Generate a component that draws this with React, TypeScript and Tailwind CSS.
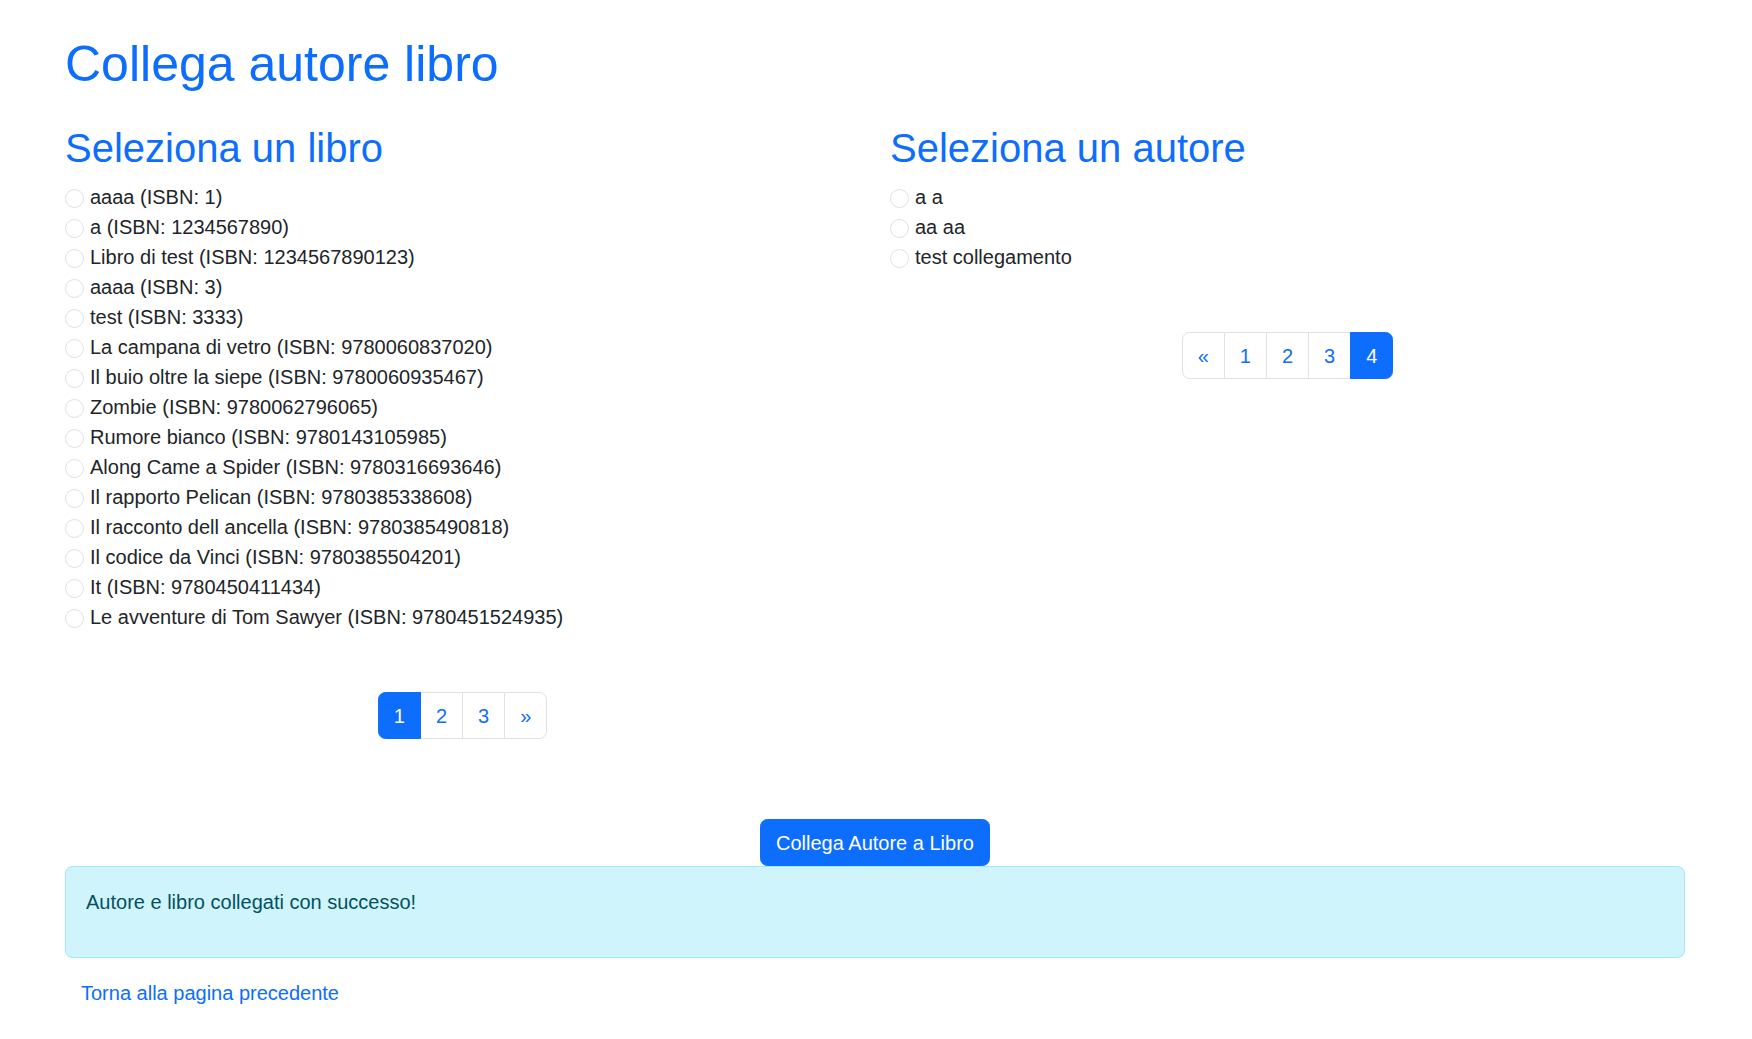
import { useState } from 'react';

const books = [
  { title: 'aaaa', isbn: '1' },
  { title: 'a', isbn: '1234567890' },
  { title: 'Libro di test', isbn: '1234567890123' },
  { title: 'aaaa', isbn: '3' },
  { title: 'test', isbn: '3333' },
  { title: 'La campana di vetro', isbn: '9780060837020' },
  { title: 'Il buio oltre la siepe', isbn: '9780060935467' },
  { title: 'Zombie', isbn: '9780062796065' },
  { title: 'Rumore bianco', isbn: '9780143105985' },
  { title: 'Along Came a Spider', isbn: '9780316693646' },
  { title: 'Il rapporto Pelican', isbn: '9780385338608' },
  { title: 'Il racconto dell ancella', isbn: '9780385490818' },
  { title: 'Il codice da Vinci', isbn: '9780385504201' },
  { title: 'It', isbn: '9780450411434' },
  { title: 'Le avventure di Tom Sawyer', isbn: '9780451524935' },
];

const authors = ['a a', 'aa aa', 'test collegamento'];

interface RadioRowProps {
  label: string;
  checked: boolean;
  onSelect: () => void;
}

function RadioRow({ label, checked, onSelect }: RadioRowProps) {
  return (
    <label className="flex items-center h-[30px] cursor-pointer" onClick={onSelect}>
      <span
        className={`w-[19px] h-[19px] mt-[2px] rounded-full border shrink-0 mr-[6px] flex items-center justify-center ${
          checked ? 'border-[#0d6efd] bg-[#0d6efd]' : 'border-[#dee2e6] bg-white'
        }`}
      >
        {checked && <span className="w-[8px] h-[8px] rounded-full bg-white" />}
      </span>
      <span>{label}</span>
    </label>
  );
}

interface PaginationProps {
  items: string[];
  active: string;
}

function Pagination({ items, active }: PaginationProps) {
  return (
    <nav className="flex justify-center">
      <ul className="flex">
        {items.map((item, i) => {
          const isActive = item === active;
          const first = i === 0;
          const last = i === items.length - 1;
          return (
            <li key={item}>
              <a
                href="#"
                className={`relative block px-[15px] py-[7.5px] leading-[30px] border no-underline ${
                  first ? 'rounded-l-[7.5px]' : '-ml-px'
                } ${last ? 'rounded-r-[7.5px]' : ''} ${
                  isActive
                    ? 'z-10 bg-[#0d6efd] border-[#0d6efd] text-white'
                    : 'bg-white border-[#dee2e6] text-[#0d6efd]'
                }`}
              >
                {item}
              </a>
            </li>
          );
        })}
      </ul>
    </nav>
  );
}

export default function App() {
  const [book, setBook] = useState<number | null>(null);
  const [author, setAuthor] = useState<number | null>(null);

  return (
    <div
      className="min-h-screen bg-white text-[#212529] text-[20px] leading-[30px]"
      style={{ fontFamily: '"Liberation Sans", Arial, sans-serif' }}
    >
      <div className="w-[1650px] ml-[50px] px-[15px] pt-[34px]">
        <h1 className="text-[50px] leading-[60px] text-[#0d6efd]">Collega autore libro</h1>

        <div className="flex -mx-[15px] mt-[30px]">
          {/* Book column */}
          <div className="w-1/2 px-[15px]">
            <h2 className="text-[40px] leading-[48px] text-[#0d6efd] mb-[10px]">Seleziona un libro</h2>
            <div>
              {books.map((b, i) => (
                <RadioRow
                  key={b.isbn}
                  label={`${b.title} (ISBN: ${b.isbn})`}
                  checked={book === i}
                  onSelect={() => setBook(i)}
                />
              ))}
            </div>
            <div className="mt-[60px]">
              <Pagination items={['1', '2', '3', '»']} active="1" />
            </div>
          </div>

          {/* Author column */}
          <div className="w-1/2 px-[15px]">
            <h2 className="text-[40px] leading-[48px] text-[#0d6efd] mb-[10px]">Seleziona un autore</h2>
            <div>
              {authors.map((a, i) => (
                <RadioRow key={a} label={a} checked={author === i} onSelect={() => setAuthor(i)} />
              ))}
            </div>
            <div className="mt-[60px]">
              <Pagination items={['«', '1', '2', '3', '4']} active="4" />
            </div>
          </div>
        </div>

        <div className="flex justify-center mt-[80px]">
          <button className="bg-[#0d6efd] text-white border border-[#0d6efd] rounded-[7.5px] px-[15px] py-[7.5px] leading-[30px]">
            Collega Autore a Libro
          </button>
        </div>

        <div className="bg-[#cff4fc] border border-[#9eeaf9] text-[#055160] rounded-[7.5px] p-[20px]">
          <p className="mb-[20px]">Autore e libro collegati con successo!</p>
        </div>

        <a
          href="#"
          className="inline-block mt-[11px] px-[15px] py-[7.5px] leading-[30px] border border-transparent text-[#0d6efd] no-underline"
        >
          Torna alla pagina precedente
        </a>
      </div>
    </div>
  );
}
